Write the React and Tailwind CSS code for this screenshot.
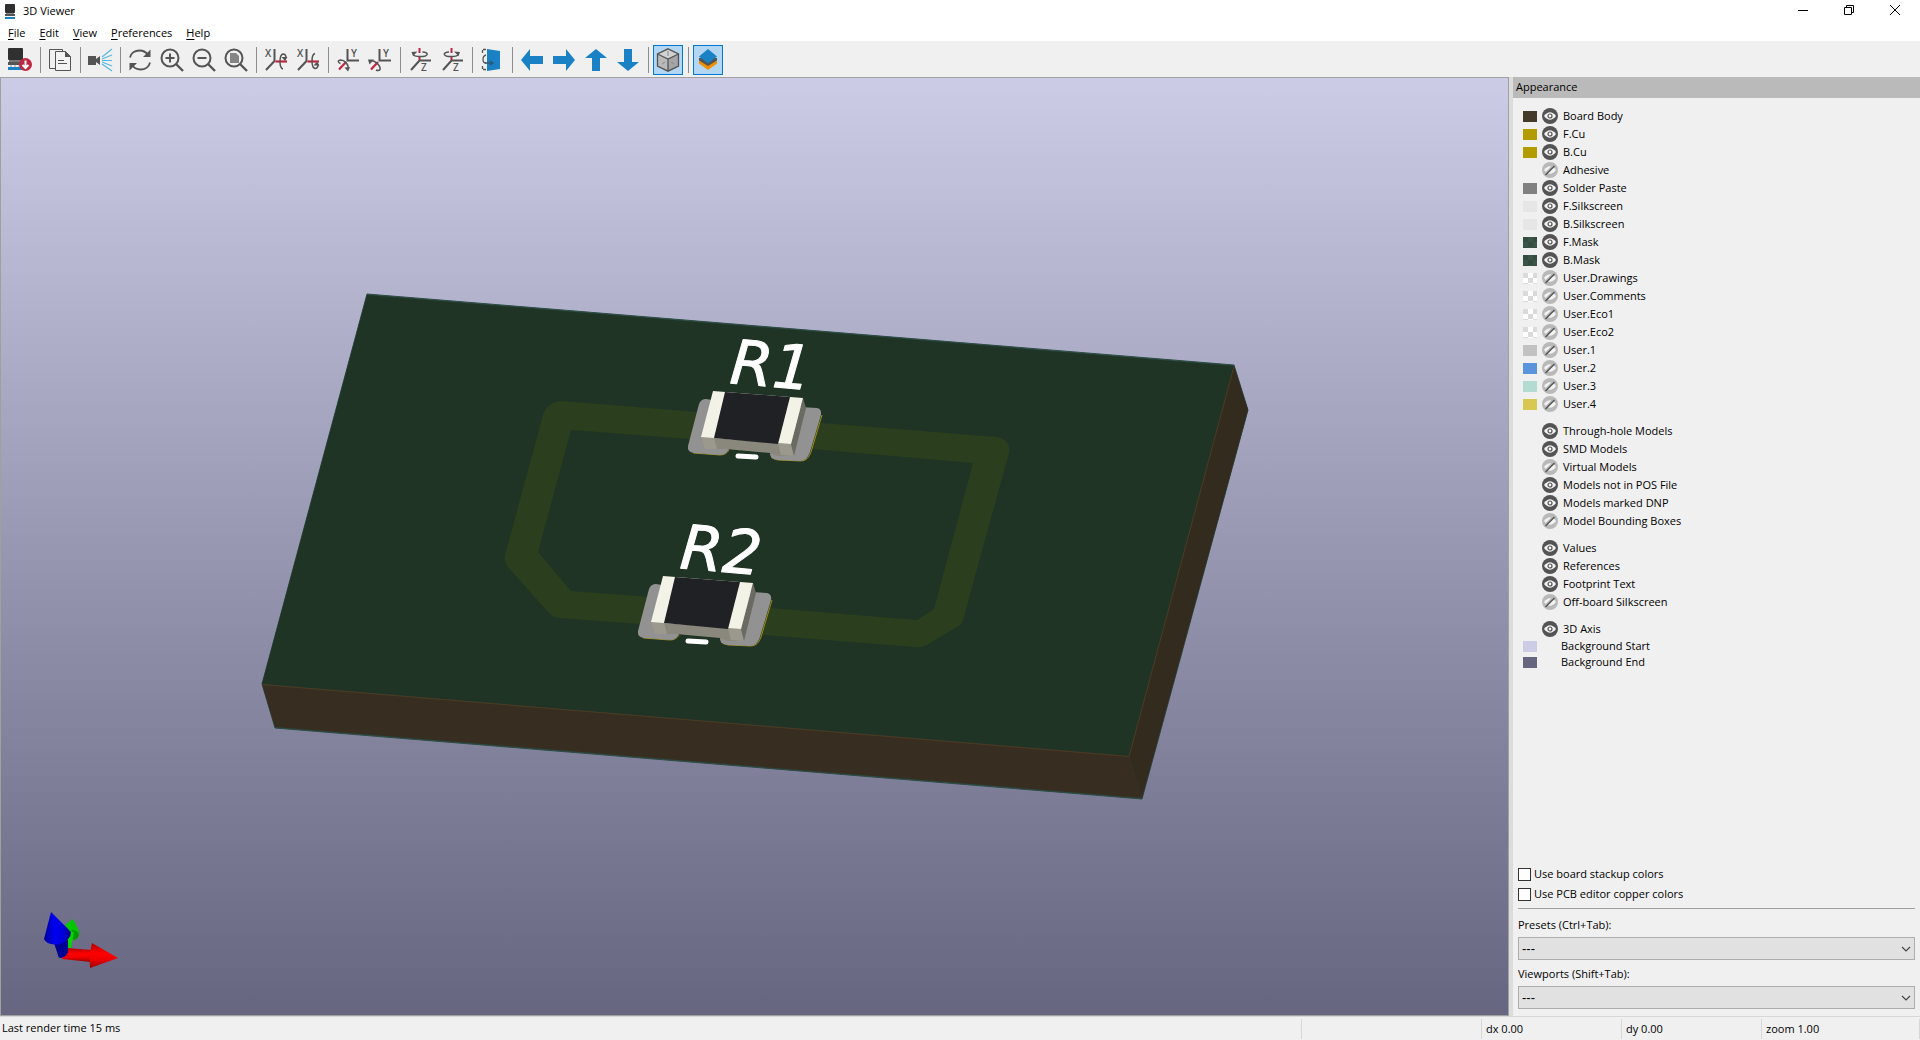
import React from "react";

const INK = "#545454";
const BLUE = "#1a81c4";
const RED = "#bf2641";

const Ico = ({ children, size = 24 }) => (
  <svg
    width={size}
    height={size}
    viewBox={`0 0 ${size} ${size}`}
    fill="none"
    className="shrink-0 overflow-visible"
    aria-hidden="true"
  >
    {children}
  </svg>
);

const BoardIcon = () => (
  <Ico size={16}>
    <rect x="3" y="1" width="10" height="9" rx="1" fill="#2f2f2f" />
    <rect x="4" y="10" width="8" height="2" fill="#8a8a8a" />
    <path d="M3 11h10v2H3z" fill={INK} />
    <path d="M3 14h10v2H3z" fill={BLUE} />
  </Ico>
);

const ExportIcon = () => (
  <Ico>
    <rect x="0" y="0" width="15" height="12" rx="1" fill="#303030" />
    <path d="M1 12h13v2H1z" fill="#777" />
    <path d="M0 14h15v3H0z" fill={INK} />
    <path d="M3 17v2M7 17v2M11 17v2" stroke="#999" />
    <path d="M0 19h14v3H0z" fill={BLUE} />
    <circle cx="17.500" cy="16.500" r="6.500" fill={RED} />
    <path d="M17.500 12.500v7M14.500 17l3 3 3-3" stroke="#fff" strokeWidth="2" />
  </Ico>
);

const CopyIcon = () => (
  <Ico>
    <path d="M7 20.500H1.500V1.500h13V4" stroke={INK} />
    <path d="M7.500 3.500h10l5 5v14h-15z" fill="#f3f3f3" stroke={INK} />
    <path d="M17 3v6h6z" fill={INK} />
    <path d="M10 12.500h6M10 15.500h9" stroke={INK} />
  </Ico>
);

const RaytraceIcon = () => (
  <Ico>
    <path d="M0 8h8v3l4-3v9l-4-3v3H0z" fill={INK} />
    <path d="M14 9L24 1M14 11l10-4M14 12.500h10M14 14l10 4M14 16l10 7" stroke="#57b8e6" strokeWidth="1.200" />
  </Ico>
);

const RefreshIcon = () => (
  <Ico>
    <path d="M2 9.500C3 5 7 2.500 11.500 2.500c4 0 7 2 9 5M22 14.500c-1 4.500-5 7-9.500 7-4 0-7-2-9-5" stroke={INK} strokeWidth="1.800" />
    <path d="M22.500 1.500V9h-7.500zM1.500 22.500V15H9z" fill={INK} />
  </Ico>
);

const Lens = ({ children }) => (
  <Ico>
    {children}
    <circle cx="10" cy="10" r="8.500" stroke={INK} strokeWidth="2" />
    <path d="M16 16l7 7" stroke={INK} strokeWidth="2.400" />
  </Ico>
);

const ZoomIn = () => <Lens><path d="M5.500 10h9M10 5.500v9" stroke={INK} strokeWidth="2" /></Lens>;
const ZoomOut = () => <Lens><path d="M5.500 10h9" stroke={INK} strokeWidth="2" /></Lens>;
const ZoomFit = () => <Lens><path d="M6 5h6l3 3v7H6z" fill="#848484" /></Lens>;

const AxisLetter = ({ x, y, children }) => (
  <text x={x} y={y} fill={INK} className="font-['Open_Sans'] text-[10px] font-semibold">
    {children}
  </text>
);

const RotateX = ({ ccw }) => (
  <Ico>
    <path d="M10.500 1v12L2 22" stroke={INK} strokeWidth="2" />
    <path d="M11.500 13.500H23" stroke={RED} strokeWidth="2.200" />
    <AxisLetter x="1" y="9">X</AxisLetter>
    {ccw ? (
      <>
        <path d="M19 5.500c-4 1-4 14 0 15 2 0 3-2 3-4" stroke={INK} strokeWidth="1.500" />
        <path d="M17.500 17.500h6l-2.500-4z" fill={INK} />
      </>
    ) : (
      <>
        <path d="M19 21c-4-1-4-14 0-15 2 0 3 2 3 4" stroke={INK} strokeWidth="1.500" />
        <path d="M17.500 9h6L21 13z" fill={INK} />
      </>
    )}
  </Ico>
);

const RotateY = ({ ccw }) => (
  <Ico>
    <path d="M11.500 1v11.500H23" stroke={INK} strokeWidth="2" />
    <path d="M10 14l-7 7.500" stroke={RED} strokeWidth="2.200" />
    <AxisLetter x="15" y="9">Y</AxisLetter>
    {ccw ? (
      <>
        <path d="M2 13.500c3-3 11 4 10 8-1 1.500-3 1-4 .5" stroke={INK} strokeWidth="1.500" />
        <path d="M0 11.500h6l-4.500 5z" fill={INK} />
      </>
    ) : (
      <>
        <path d="M4.500 15.500c-3-1-3-3 0-3.500 4 0 8 4 8 9" stroke={INK} strokeWidth="1.500" />
        <path d="M8.500 19.500l5.500-.5-2 4.500z" fill={INK} />
      </>
    )}
  </Ico>
);

const RotateZ = ({ ccw }) => (
  <Ico>
    <path d="M23 12.500H11.500L3 22" stroke={INK} strokeWidth="2" />
    <path d="M11.500 0v5M11.500 8v4" stroke={RED} strokeWidth="2" />
    <AxisLetter x="13" y="23">Z</AxisLetter>
    {ccw ? (
      <>
        <path d="M9 4c-7 .5-6 4.500 2 4.500 4 0 7-.8 7-2" stroke={INK} strokeWidth="1.500" />
        <path d="M14 3.500l6 .5-1.500 4z" fill={INK} />
      </>
    ) : (
      <>
        <path d="M14.500 4c7 .5 6 4.500-2 4.500-4 0-7-.8-7-2" stroke={INK} strokeWidth="1.500" />
        <path d="M9.500 3.500L3.500 4 5 8z" fill={INK} />
      </>
    )}
  </Ico>
);

const FlipIcon = () => (
  <Ico>
    <path d="M6 1.500H2.500V5M2.500 18v3.500H6" stroke={INK} strokeWidth="1.300" strokeDasharray="3 1" />
    <path d="M6 7c-4 1-4 8 0 8" stroke={INK} strokeWidth="1.300" />
    <path d="M7 1l13 2v18L7 23z" fill={BLUE} />
    <path d="M5 15h7M10 13l3 2-3 2" stroke="#2e5873" strokeWidth="1.300" />
  </Ico>
);

const Arrow = ({ d }) => <Ico><path d={d} fill={BLUE} /></Ico>;
const LeftIcon = () => <Arrow d="M1 12L10 1v7h13v8H10v7z" />;
const RightIcon = () => <Arrow d="M23 12L14 1v7H1v8h13v7z" />;
const UpIcon = () => <Arrow d="M12 1l11 9h-7v13H8V10H1z" />;
const DownIcon = () => <Arrow d="M12 23l11-9h-7V1H8v13H1z" />;

const CubeIcon = () => (
  <Ico>
    <path d="M12 .8L22.500 6v12L12 23.200 1.500 18V6z" fill="#b9b9b9" />
    <path d="M12 .8L22.500 6 12 11 1.500 6z" fill="#d2d2d2" />
    <path d="M12 11l10.500-5v12L12 23.200z" fill="#a5a5a5" />
    <path d="M12 .8L22.500 6v12L12 23.200 1.500 18V6zM1.500 6L12 11l10.500-5M12 11v12" stroke={INK} strokeWidth="1.300" />
    <path d="M12 3v5M6 16l3-2M18 16l-3-2" stroke="#888" />
  </Ico>
);

const LayersIcon = () => (
  <Ico>
    <path d="M3 13h18v2.500L12 22l-9-6.500z" fill="#f29100" />
    <path d="M3 10h18v2.500L12 18l-9-5.500z" fill={INK} />
    <path d="M12 1l9 7.500-9 7-9-7z" fill={BLUE} />
  </Ico>
);

const GROUPS = [
  [["Export current view", ExportIcon]],
  [["Copy image", CopyIcon]],
  [["Raytracing", RaytraceIcon]],
  [["Redraw", RefreshIcon], ["Zoom in", ZoomIn], ["Zoom out", ZoomOut], ["Zoom to fit", ZoomFit]],
  [["Rotate X clockwise", RotateX], ["Rotate X counterclockwise", RotateX, true]],
  [["Rotate Y clockwise", RotateY], ["Rotate Y counterclockwise", RotateY, true]],
  [["Rotate Z clockwise", RotateZ], ["Rotate Z counterclockwise", RotateZ, true]],
  [["Flip board", FlipIcon]],
  [["Move left", LeftIcon], ["Move right", RightIcon], ["Move up", UpIcon], ["Move down", DownIcon]],
  [["Orthographic projection", CubeIcon, false, true]],
  [["Appearance manager", LayersIcon, false, true]],
];

const Toolbar = () => (
  <div role="toolbar" aria-label="Main toolbar" className="flex h-9 shrink-0 items-center bg-[#f0f0f0] px-1 pt-[2px]">
    {GROUPS.map((group, i) => (
      <React.Fragment key={i}>
        {i > 0 && (
          <div className="flex w-2 justify-center">
            <div className="h-[26px] w-px bg-[#8d8d8d]" />
          </div>
        )}
        {group.map(([label, Icon, ccw, on]) => (
          <button
            key={label}
            type="button"
            aria-label={label}
            aria-pressed={on}
            className={
              on
                ? "mx-px flex size-[30px] items-center justify-center border border-[#0078d7] bg-[#b3d7f3]"
                : "mx-px flex size-[30px] items-center justify-center"
            }
          >
            <Icon ccw={ccw} />
          </button>
        ))}
      </React.Fragment>
    ))}
  </div>
);

const Resistor = ({ name }) => (
  <g>
    <path d="M693 453l27 2q6 0 9-5M822 415l-11 37q-3 9-10 9l-23-1q-5-1-7-3" fill="none" stroke="#a08c14" />
    <path d="M706 399q-5 0-7 5l-11 42q-1 6 6 7l26 2q6 0 9-6l11-44z" fill="#929292" />
    <path d="M782 406l35 2q5 1 4 7l-11 37q-3 9-10 9l-22-1q-8-1-8-6z" fill="#929292" />
    <path d="M701 437l90 7 3 12-17 0-7-3-44-4h-21z" fill="#8a887c" />
    <path d="M701 437l13 1 3 11h-12zM778 443l13 1 3 12-13-1z" fill="#9b998d" />
    <path d="M803 398l3 10-12 48-3-12z" fill="#6a6a62" />
    <path d="M713 391l90 7-12 46-90-7z" fill="#f2f2e6" />
    <path d="M725 392l65 5-12 47-64-6z" fill="#202124" />
    <path d="M738 456l18 1" stroke="#fff" strokeWidth="5" strokeLinecap="round" />
    <text
      x="729"
      y="383"
      transform="rotate(5 729 383)"
      fill="#fff"
      stroke="#fff"
      strokeLinejoin="round"
      className="font-['DejaVu_Sans'] text-[61px] italic"
    >
      {name}
    </text>
  </g>
);

const Axis = () => (
  <g>
    <defs>
      <linearGradient id="axis-x" x1="0" y1="0" x2="0" y2="1">
        <stop offset="0" stopColor="#b00000" />
        <stop offset="0.400" stopColor="#ff0000" />
        <stop offset="0.650" stopColor="#f00000" />
        <stop offset="1" stopColor="#990000" />
      </linearGradient>
      <linearGradient id="axis-z" x1="0" y1="0" x2="1" y2="0">
        <stop offset="0" stopColor="#00009c" />
        <stop offset="0.400" stopColor="#0000f0" />
        <stop offset="0.700" stopColor="#0000dd" />
        <stop offset="1" stopColor="#000087" />
      </linearGradient>
    </defs>
    <path d="M73 919l6 12q1 7-5 9-4-1-4-8l-5-7z" fill="#00c800" />
    <path d="M72 930q6 0 7 5-1 4-5 5-4-2-2-10z" fill="#009500" />
    <path d="M68 931l6 1-3 16-6 1z" fill="#00d800" />
    <path d="M67 948l25 2-1 12-29-3z" fill="url(#axis-x)" />
    <path d="M92 943l26 15-28 10q-1-14 2-25z" fill="url(#axis-x)" />
    <path d="M54 943l14-3v11q0 5-7 7-3 0-3-3z" fill="#000093" />
    <path d="M51 912l20 20q0 8-11 12-13 2-16-5z" fill="url(#axis-z)" />
  </g>
);

const Scene = () => (
  <svg
    role="img"
    aria-label="3D board with resistors R1 and R2"
    viewBox="1 78 1507 937"
    className="h-full w-full"
  >
    <path d="M367 294l867 71 14 45-106 389-867-71-13-44z" fill="#2c4a43" stroke="#2c4a43" />
    <path d="M262 684l867 72 13 42-867-71z" fill="#372e21" />
    <path d="M1234 366l14 44-106 388-13-42z" fill="#342b1f" />
    <path d="M367 295l867 71-105 390-867-72z" fill="#1f3425" />
    <path d="M262 684.500l867 72 105-390" stroke="#4d3a23" fill="none" />
    <path
      fillRule="evenodd"
      fill="#2b3e1e"
      d="M697 412L562 401Q548 401 543 415L505 555Q504 562 508 567L548 612Q553 618 560 618L640 624 763 635 915 647Q924 648 930 643L957 627Q962 624 963 620L1009 453Q1011 440 997 437L822 423ZM690 439L812 449 973 463 934 609 917 620 770 608 650 597 571 591 538 552 571 430Z"
    />
    <Resistor name="R1" />
    <g transform="translate(-50 185)">
      <Resistor name="R2" />
    </g>
    <Axis />
  </svg>
);

const Eye = ({ on }) =>
  on ? (
    <Ico size={16}>
      <circle cx="8" cy="8" r="8" fill={INK} />
      <path d="M2 8q6-7.500 12 0-6 7.500-12 0z" fill="#f4f4f4" />
      <circle cx="8" cy="8" r="2" stroke={INK} strokeWidth="1.200" />
    </Ico>
  ) : (
    <Ico size={16}>
      <circle cx="8" cy="8" r="8" fill="#b9b9b9" />
      <path d="M2 8q6-7.500 12 0-6 7.500-12 0z" fill="#f4f4f4" />
      <path d="M3 12L12 3" stroke="#b9b9b9" strokeWidth="2" />
      <path d="M3.500 13L12.500 4" stroke={INK} strokeWidth="1.500" />
    </Ico>
  );

const CHECKER =
  "bg-[conic-gradient(#fff_25%,#dadada_0_50%,#fff_0_75%,#dadada_0)] bg-size-[10px_10px]";
const MASK =
  "bg-[conic-gradient(#3b5649_25%,#334d40_0_50%,#3b5649_0_75%,#334d40_0)] bg-size-[10px_10px]";

const LAYERS = [
  ["Board Body", true, "bg-[#443a29]"],
  ["F.Cu", true, "bg-[#b39c00]"],
  ["B.Cu", true, "bg-[#b39c00]"],
  ["Adhesive", false, null],
  ["Solder Paste", true, "bg-[#808080]"],
  ["F.Silkscreen", true, "bg-[#e6e6e6]"],
  ["B.Silkscreen", true, "bg-[#e6e6e6]"],
  ["F.Mask", true, MASK],
  ["B.Mask", true, MASK],
  ["User.Drawings", false, CHECKER],
  ["User.Comments", false, CHECKER],
  ["User.Eco1", false, CHECKER],
  ["User.Eco2", false, CHECKER],
  ["User.1", false, "bg-[#c2c2c2]"],
  ["User.2", false, "bg-[#5994dc]"],
  ["User.3", false, "bg-[#b4dbd2]"],
  ["User.4", false, "bg-[#d8c852]"],
];
const MODELS = [
  ["Through-hole Models", true],
  ["SMD Models", true],
  ["Virtual Models", false],
  ["Models not in POS File", true],
  ["Models marked DNP", true],
  ["Model Bounding Boxes", false],
];
const TEXTS = [
  ["Values", true],
  ["References", true],
  ["Footprint Text", true],
  ["Off-board Silkscreen", false],
];

const Swatch = ({ color, label }) =>
  color ? (
    <button type="button" aria-label={`${label} color`} className={`h-[11px] w-[14px] shrink-0 ${color}`} />
  ) : (
    <span className="w-[14px] shrink-0" />
  );

const Rows = ({ items }) => (
  <ul className="mb-[9px]">
    {items.map(([label, on, color]) => (
      <li key={label} className="flex h-[18px] items-center gap-[5px]">
        <Swatch color={color} label={label} />
        <button type="button" aria-pressed={on} className="flex items-center gap-[5px] whitespace-nowrap">
          <Eye on={on} />
          {label}
        </button>
      </li>
    ))}
  </ul>
);

const Choice = ({ id, label }) => (
  <div className="flex flex-col">
    <label htmlFor={id} className="mb-1 leading-4">{label}</label>
    <div className="grid">
      <select
        id={id}
        className="col-start-1 row-start-1 h-[23px] w-full appearance-none border border-[#adadad] bg-[#e1e1e1] pl-[3px] font-['Liberation_Sans',sans-serif] text-[13px]"
      >
        <option>---</option>
      </select>
      <svg
        width="10"
        height="6"
        viewBox="0 0 10 6"
        className="pointer-events-none col-start-1 row-start-1 mr-1 self-center justify-self-end"
        aria-hidden="true"
      >
        <path d="M1 1l4 4 4-4" fill="none" stroke="#444" strokeWidth="1.200" />
      </svg>
    </div>
  </div>
);

const Tick = ({ label }) => (
  <label className="flex h-5 items-center gap-[3px]">
    <input type="checkbox" className="size-[13px] appearance-none border border-[#333] bg-white checked:bg-[#0078d7]" />
    {label}
  </label>
);

const Sidebar = () => (
  <aside className="flex w-[407px] shrink-0 flex-col text-[11px]">
    <h2 className="h-[21px] bg-[#bababa] px-[3px] text-[11px] leading-[20px]">Appearance</h2>
    <div className="flex grow flex-col px-[5px] pb-[7px]">
      <div className="grow pt-[9px] pl-[5px]">
        <Rows items={LAYERS} />
        <Rows items={MODELS} />
        <Rows items={TEXTS} />
        <ul>
          <li className="flex h-[18px] items-center gap-[5px]">
            <Swatch />
            <button type="button" aria-pressed="true" className="flex items-center gap-[5px]">
              <Eye on />
              3D Axis
            </button>
          </li>
          <li className="flex h-4 items-center gap-6">
            <Swatch color="bg-[#cccce6]" label="Background Start" />
            Background Start
          </li>
          <li className="flex h-4 items-center gap-6">
            <Swatch color="bg-[#666680]" label="Background End" />
            Background End
          </li>
        </ul>
      </div>
      <Tick label="Use board stackup colors" />
      <Tick label="Use PCB editor copper colors" />
      <hr className="mt-1 border-[#a0a0a0]" />
      <div className="mt-2 flex flex-col gap-[6px]">
        <Choice id="presets" label="Presets (Ctrl+Tab):" />
        <Choice id="viewports" label="Viewports (Shift+Tab):" />
      </div>
    </div>
  </aside>
);

const MENUS = ["File", "Edit", "View", "Preferences", "Help"];

export default function App() {
  return (
    <div className="flex h-screen flex-col overflow-hidden bg-[#f0f0f0] font-['Open_Sans','Noto_Sans',sans-serif] text-xs text-black">
      <header className="shrink-0 bg-white">
        <div className="flex h-6 items-start pr-[2px] pl-[2px]">
          <h1 className="flex h-[22px] grow items-center gap-[5px] text-[11px]">
            <BoardIcon />
            3D Viewer
          </h1>
          <button type="button" aria-label="Minimize" className="flex h-5 w-[46px] items-center justify-center">
            <Ico size={10}><path d="M0 5.500h10" stroke="#000" /></Ico>
          </button>
          <button type="button" aria-label="Restore" className="flex h-5 w-[46px] items-center justify-center">
            <Ico size={10}><path d="M.5 2.500h7v7h-7zM2.500 2V.5h7v7H8" stroke="#000" /></Ico>
          </button>
          <button type="button" aria-label="Close" className="flex h-5 w-[46px] items-center justify-center">
            <Ico size={10}><path d="M0 0l10 10M10 0L0 10" stroke="#000" /></Ico>
          </button>
        </div>
        <nav aria-label="Menu bar" className="flex h-[17px] gap-[14px] px-2 text-[11px] leading-[17px]">
          {MENUS.map((m) => (
            <button key={m} type="button">
              <span className="underline underline-offset-2">{m[0]}</span>
              {m.slice(1)}
            </button>
          ))}
        </nav>
      </header>
      <Toolbar />
      <div className="flex min-h-0 grow">
        <main className="min-w-0 grow border border-[#a0a0a0] bg-linear-to-b from-[#cccce6] to-[#666680]">
          <Scene />
        </main>
        <div className="w-1 shrink-0 bg-[#dcdcdc]" />
        <Sidebar />
      </div>
      <footer className="flex h-6 shrink-0 items-center border-t border-[#d7d7d7] text-[11px]">
        <div className="grow pl-[2px]">Last render time 15 ms</div>
        <div className="h-5 w-[180px] border-l border-[#d7d7d7]" />
        <div className="h-5 w-[140px] border-l border-[#d7d7d7] pl-1 leading-5">dx 0.00</div>
        <div className="h-5 w-[140px] border-l border-[#d7d7d7] pl-1 leading-5">dy 0.00</div>
        <div className="h-5 w-[159px] border-x border-[#d7d7d7] pl-1 leading-5">zoom 1.00</div>
      </footer>
    </div>
  );
}
